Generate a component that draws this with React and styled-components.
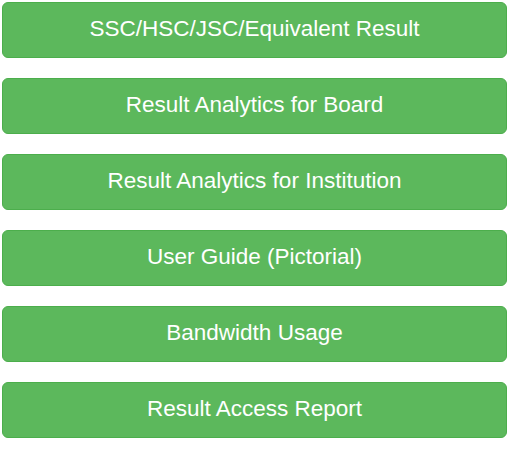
import React from 'react';
import styled, { createGlobalStyle } from 'styled-components';

const GlobalStyle = createGlobalStyle`
  html, body {
    margin: 0;
    padding: 0;
    background: #ffffff;
  }
`

const links = [
  'SSC/HSC/JSC/Equivalent Result',
  'Result Analytics for Board',
  'Result Analytics for Institution',
  'User Guide (Pictorial)',
  'Bandwidth Usage',
  'Result Access Report',
]

const App = () => {
  return (
    <>
      <GlobalStyle />
      <Menu>
        {links.map((label) => (
          <MenuButton key={label} href="#">{label}</MenuButton>
        ))}
      </Menu>
    </>
  )
}

const Menu = styled.nav`
  display: flex;
  flex-direction: column;
  gap: 20px;
  padding: 2px 6px 0 2px;
  width: 513px;
  box-sizing: border-box;
`

const MenuButton = styled.a`
  display: flex;
  align-items: center;
  justify-content: center;
  height: 56px;
  padding-bottom: 3px;
  box-sizing: border-box;
  background-color: #5cb85c;
  border: 1px solid #4cae4c;
  border-radius: 6px;
  color: #ffffff;
  font-family: "Liberation Sans", Arial, sans-serif;
  font-size: 22.5px;
  text-decoration: none;
  cursor: pointer;
`

export default App;
